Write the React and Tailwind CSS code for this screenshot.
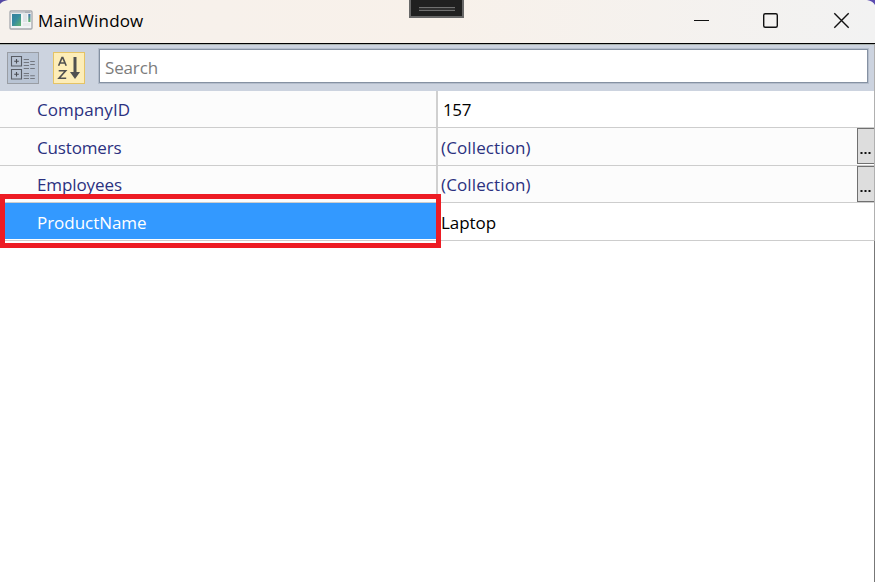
import React from "react";

function AppIcon() {
  return (
    <svg width="24" height="20" viewBox="0 0 24 20" className="shrink-0">
      <defs>
        <linearGradient id="pane" x1="0" y1="0" x2="1" y2="1">
          <stop offset="0" stopColor="#357f9b" />
          <stop offset=".45" stopColor="#368ba0" />
          <stop offset="1" stopColor="#62b56d" />
        </linearGradient>
        <linearGradient id="strip" x1="0" y1="0" x2="0" y2="1">
          <stop offset="0" stopColor="#3e72ad" />
          <stop offset="1" stopColor="#63b66b" />
        </linearGradient>
      </defs>
      <rect x="1" y="1" width="22" height="18" rx="1" fill="#f2f4f6" stroke="#a6a8ad" strokeWidth="1.3" />
      <path d="M2 2.500h20" stroke="#c7cacf" strokeWidth="1.6" />
      <path d="M16 2.200h5" stroke="#9fa2a8" />
      <rect x="3" y="4" width="9" height="12" fill="url(#pane)" />
      <rect x="14" y="4" width="4" height="8" fill="#dfe3e6" />
      <rect x="19.3" y="4" width="2.2" height="8" fill="url(#strip)" />
      <rect x="14" y="13" width="7" height="3" fill="#e8eaec" />
    </svg>
  );
}

function CategoryIcon() {
  return (
    <svg width="30" height="30" viewBox="0 0 30 30" fill="none" stroke="#73777f">
      <path d="M3.500 3.500h10v9.500h-10zM3.500 16.500h10v9.500h-10z" stroke="#585c64" strokeWidth="1.1" />
      <path d="M8.500 6v4.600M6.200 8.300h4.600M8.500 19v4.600M6.200 21.300h4.600" stroke="#4b4e54" strokeWidth="1.1" />
      <path
        d="M15.700 6.500h5.300M15.700 9.500h5.300M15.700 12.500h5.300M15.700 15.500h5.300M22.200 8.500h4.600M22.200 11.500h4.600M22.200 15.500h4.600M15.700 20.500h5.300M15.700 22.800h5.300M15.700 25.500h5.300M22.200 22.800h4.600M22.200 25.500h4.600"
        strokeWidth="1.1"
      />
    </svg>
  );
}

function SortIcon() {
  return (
    <svg width="30" height="30" viewBox="0 0 30 30" fill="none" stroke="#505050">
      <path d="M4.600 12.800L8 4.600h.8L12.200 12.800M5.800 10h5.200" strokeWidth="1.6" />
      <path d="M4.700 17.700h7L5 25.300h7.200" strokeWidth="1.600" />
      <path d="M21 4v16" strokeWidth="3" />
      <path d="M16 19h10l-5 7z" fill="#505050" stroke="none" />
    </svg>
  );
}

const rows = [
  { name: "CompanyID", value: "157", height: "h-[37px]", nameStyle: "leading-[37px] tracking-[0.06px]", valueStyle: "leading-[37px] pl-[5px] tracking-[-0.4px] text-black", valueBg: "bg-white" },
  { name: "Customers", value: "(Collection)", height: "h-[38px]", nameStyle: "leading-[39px] tracking-[-0.16px]", valueStyle: "leading-[39px] pl-[3px] tracking-[0.12px] text-[#2b3180]", valueBg: "bg-[#fcfcfc]", more: true },
  { name: "Employees", value: "(Collection)", height: "h-[37px]", nameStyle: "leading-[37px] tracking-[-0.1px]", valueStyle: "leading-[37px] pl-[3px] tracking-[0.12px] text-[#2b3180]", valueBg: "bg-[#fcfcfc]", more: true },
  { name: "ProductName", value: "Laptop", height: "h-[38px]", nameStyle: "leading-[39px] tracking-[-0.04px]", valueStyle: "leading-[39px] pl-[3px] tracking-[-0.05px] text-black", valueBg: "bg-white", selected: true },
];

function PropertyRow({ row }) {
  return (
    <div className={`flex overflow-hidden border-b border-[#cdcdcd] ${row.height}`}>
      <div
        className={`w-[436px] shrink-0 pl-[37px] ${row.nameStyle} ${
          row.selected ? "mb-px bg-[#3399ff] text-white" : "bg-[#fcfcfc] text-[#2b3180]"
        }`}
      >
        {row.name}
      </div>
      <div className="w-[2px] shrink-0 bg-[#d0d0d0]" />
      <div className={`grow ${row.valueStyle} ${row.valueBg}`}>{row.value}</div>
      {row.more && (
        <button className="flex h-[36px] w-[18px] shrink-0 items-end justify-center border border-[#707070] bg-[#dddddd] pb-[9px]">
          <svg width="12" height="2" viewBox="0 0 12 2" fill="#111" aria-label="More">
            <path d="M0.500 0h2v2h-2zM4.500 0h2v2h-2zM8.500 0h2v2h-2z" />
          </svg>
        </button>
      )}
    </div>
  );
}

export default function App() {
  return (
    <div className="relative flex h-[582px] w-[875px] flex-col overflow-hidden bg-white font-['Open_Sans','Noto_Sans',sans-serif] text-[17px]">
      <header className="flex h-[44px] shrink-0 border-b border-black bg-linear-to-r from-[#f6f1ec] via-[#f8f1ea] to-[#f2f2f2]">
        <div className="flex grow pt-[10px] pl-[9px]">
          <AppIcon />
          <span className="ml-[5px] leading-[22px] tracking-[0.18px] text-black">MainWindow</span>
        </div>
        <svg width="195" height="43" viewBox="0 0 195 43" fill="none" stroke="#111" strokeWidth="1.4">
          <path d="M14 20.500h15" strokeWidth="1" />
          <rect x="83.700" y="13.700" width="13.600" height="13.600" rx="1.500" />
          <path d="M154.300 13.300l14.400 14.400M168.700 13.300l-14.400 14.400" />
        </svg>
      </header>

      <div className="flex h-[47px] shrink-0 border-t border-[#a9b1ad] bg-[#ccd3df] pl-[7px]">
        <button className="mt-[7px] size-[32px] border border-[#999da4] bg-[#b9c4d4]">
          <CategoryIcon />
        </button>
        <button className="mt-[7px] ml-[14px] size-[32px] border border-[#e5c365] bg-[#fdedb8]">
          <SortIcon />
        </button>
        <div className="mt-[4px] ml-[14px] h-[34px] w-[769px] border border-[#8591a2] bg-white pl-[5px] leading-[36px] tracking-[-0.15px] text-[#7c7c7c] shadow-[0_0_0_1px_#b4bdcb]">
          Search
        </div>
      </div>

      <main className="grow">
        {rows.map((row) => (
          <PropertyRow key={row.name} row={row} />
        ))}
      </main>

      <div className="absolute top-0 left-[409px] flex h-[18px] w-[55px] justify-center border-2 border-t-0 border-[#686868] bg-[#202020] pt-[7px]">
        <div className="h-[4px] w-[36px] border-y border-[#707070] bg-[#303030]" />
      </div>
      <div className="absolute top-[44px] right-0 h-[197px] w-px bg-[#b0b0b0]" />
      <div className="absolute top-[241px] right-0 h-[341px] w-px bg-[#777777]" />
      <div className="absolute top-[194px] left-0 h-[54px] w-[441px] border-5 border-[#ed1c24]" />
      <svg className="absolute top-0 left-0" width="8" height="5" viewBox="0 0 8 5">
        <path d="M0 0h8Q2 1 0 4z" fill="#5448a4" />
      </svg>
      <svg className="absolute top-0 right-0" width="8" height="6" viewBox="0 0 8 6">
        <path d="M0 0h8v5Q6 1 0 0z" fill="#5b4bb0" />
      </svg>
    </div>
  );
}
